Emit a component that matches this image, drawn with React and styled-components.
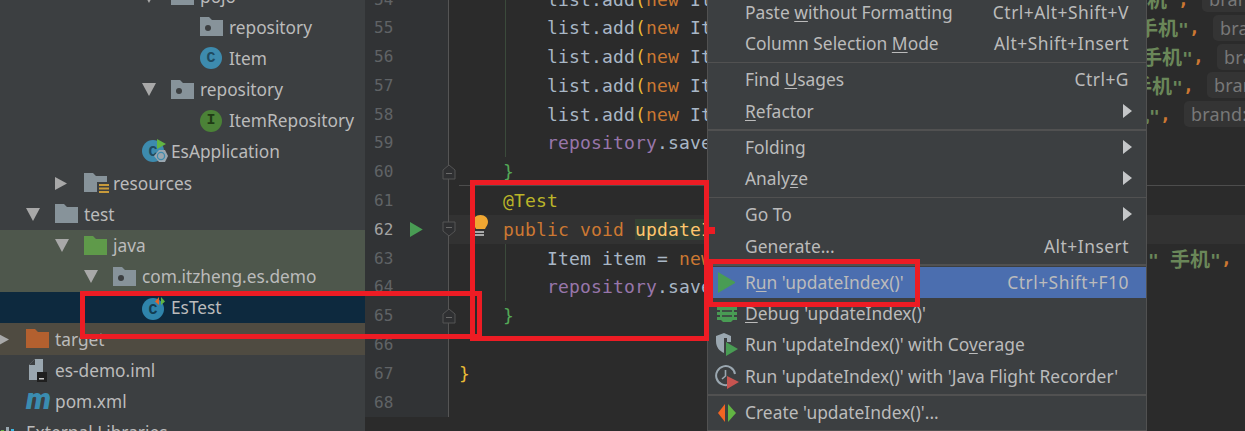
import React from 'react'
import styled, { createGlobalStyle } from 'styled-components'

const Global = createGlobalStyle`
  html, body { margin: 0; padding: 0; background: #2b2b2b; }
`
const UI_FONT = `"Noto Sans", "Noto Sans CJK SC", sans-serif`
const MONO_FONT = `"DejaVu Sans Mono", "Noto Sans CJK SC", monospace`

const Frame = styled.div`
  position: relative;
  display: flex;
  width: 1245px;
  height: 431px;
  overflow: hidden;
  background: #2b2b2b;
`
/* project tree */
const Sidebar = styled.div`
  flex: 0 0 365px;
  height: 431px;
  overflow: hidden;
  background: #3c3f41;
  font-family: ${UI_FONT};
`
const Tree = styled.div`
  margin-top: -19.6px;
`
const BANDS = { green: '#4e574c', selected: '#0d293e', brown: '#4f4b41' }
const TreeRow = styled.div`
  display: flex;
  align-items: center;
  height: 31.2px;
  background: ${({ $band }) => BANDS[$band] || 'transparent'};
  color: #bbbbbb;
  font-size: 17.3px;
  white-space: nowrap;
`
const ArrowSlot = styled.div`
  flex: 0 0 29px;
  display: flex;
  align-items: center;
  margin-left: ${({ $depth }) => 29 * $depth - 32}px;
`
const IconSlot = styled.div`
  flex: 0 0 29px;
  display: flex;
  align-items: center;
  height: 24px;
`
const ClassBadge = styled.span`
  display: flex;
  align-items: center;
  justify-content: center;
  width: 22px;
  height: 22px;
  border-radius: 50%;
  background: ${({ $bg }) => $bg};
  color: ${({ $fg }) => $fg};
  font-family: "Liberation Mono", monospace;
  font-size: 15px;
  font-weight: 700;
`
const MavenMark = styled.span`
  margin-top: -5px;
  color: #3a8cb0;
  font-family: Roboto, sans-serif;
  font-size: 30px;
  font-style: italic;
  font-weight: 900;
  line-height: 24px;
`

/* editor */
const Editor = styled.div`
  flex: 1;
  height: 431px;
  overflow: hidden;
  font-family: ${MONO_FONT};
`
const Lines = styled.div`
  margin-top: -15.4px;
`
const EditorRow = styled.div`
  display: flex;
  height: 28.8px;
`
const Gutter = styled.div`
  flex: 0 0 84px;
  display: flex;
  align-items: center;
  box-sizing: border-box;
  background: #313335;
  border-right: 1px solid #555555;
`
const LineNo = styled.span`
  flex: 0 0 45px;
  box-sizing: border-box;
  padding-left: 9px;
  color: ${({ $active }) => ($active ? '#a4a3a3' : '#606366')};
  font-size: 16px;
`
const RunSlot = styled.span`
  flex: 0 0 32px;
  display: flex;
  align-items: center;
`
const FoldSlot = styled.span`
  position: relative;
  z-index: 1;
  display: flex;
  width: 14px;
  margin-right: -8px;
`
const Line = styled.div`
  position: relative;
  flex: 1;
  display: flex;
  align-items: center;
  background: ${({ $current }) => ($current ? '#323232' : 'transparent')};
  ${({ $guide }) => $guide && `
    &::before {
      content: '';
      position: absolute;
      left: 56px;
      top: 0;
      bottom: 0;
      width: 1px;
      background: #3b4a3b;
    }
  `}
  ${({ $rule }) => $rule && `
    &::after {
      content: '';
      position: absolute;
      left: 10px;
      right: 0;
      top: -1px;
      height: 1px;
      background: #4d4d4d;
    }
  `}
`
const Code = styled.div`
  flex: 0 0 651px;
  box-sizing: border-box;
  padding-left: 10px;
  overflow: hidden;
  color: #a9b7c6;
  font-size: 18px;
  letter-spacing: 0.16px;
  white-space: pre;
`
const Tail = styled.div`
  display: flex;
  align-items: center;
  flex-shrink: 0;
  padding-left: ${({ $at }) => $at - 1100}px;
  font-size: 18px;
  letter-spacing: 0.16px;
  white-space: pre;
`
const Keyword = styled.span`color: #cc7832;`
const Field = styled.span`color: #9876aa;`
const Annotation = styled.span`color: #bbb529;`
const Paren = styled.span`color: #e8ba36;`
const Brace = styled.span`color: ${({ $color }) => $color};`
const Method = styled.span`
  background: #344134;
  color: #ffc66d;
`
const Str = styled.span`
  color: #6a8759;
  font-weight: 700;
`
const Cjk = styled.span`
  font-size: 20px;
  letter-spacing: 0;
`
const Comma = styled.span`
  color: #cc7832;
  font-weight: 700;
`
const Hint = styled.span`
  margin-left: 13px;
  padding: 0 7px;
  border-radius: 5px;
  background: #343434;
  color: #787878;
  font-family: ${UI_FONT};
  font-size: 18px;
  line-height: 26px;
`
const Bulb = styled.svg`
  position: absolute;
  left: 24px;
  top: 0;
`

/* context menu */
const Menu = styled.div`
  position: absolute;
  left: 707px;
  top: -2.7px;
  z-index: 2;
  width: 440px;
  box-sizing: border-box;
  background: #3c3f41;
  border-left: 1px solid #515151;
  border-right: 1px solid #515151;
  color: #bbbbbb;
  font-family: ${UI_FONT};
  font-size: 17.4px;
`
const Item = styled.div`
  display: flex;
  align-items: center;
  box-sizing: border-box;
  height: 31.4px;
  padding-right: 17px;
  padding-bottom: 2px;
  background: ${({ $active }) => ($active ? '#4b6eaf' : 'transparent')};
  white-space: nowrap;
`
const ItemIcon = styled.span`
  flex: 0 0 37px;
  display: flex;
  align-items: center;
  justify-content: center;
  margin-top: 2px;
`
const ItemLabel = styled.span`
  flex: 1;
`
const Shortcut = styled.span`
  letter-spacing: 0.5px;
`
const Mnemonic = styled.u`
  text-underline-offset: 2px;
`
const SubArrow = styled.svg`
  margin-right: -3px;
`
const Separator = styled.div`
  display: flex;
  align-items: center;
  height: 4.6px;
  &::before {
    content: '';
    flex: 1;
    height: ${({ $thick }) => ($thick ? 2 : 1)}px;
    background: #515151;
  }
`

/* red annotation boxes painted on the screenshot */
const RedBox = styled.div`
  position: absolute;
  z-index: 3;
  left: ${({ $x }) => $x}px;
  top: ${({ $y }) => $y}px;
  width: ${({ $w }) => $w}px;
  height: ${({ $h }) => $h}px;
  box-sizing: border-box;
  border: 5px solid #ed1c24;
`
const RedDot = styled.div`
  position: absolute;
  z-index: 3;
  left: 709px;
  top: 227px;
  width: 6px;
  height: 7px;
  background: #ed1c24;
`

const Arrow = ({ open }) => (
  <svg width="15" height="13" viewBox="0 0 15 13">
    {open
      ? <polygon points="0,0 14,0 7,13" fill="#a8a8a8" />
      : <polygon points="0,0 12,6.5 0,13" fill="#a8a8a8" />}
  </svg>
)

const MenuArrow = () => (
  <SubArrow width="9" height="14" viewBox="0 0 9 14">
    <polygon points="0,0 9,7 0,14" fill="#c4c6c8" />
  </SubArrow>
)

const Folder = ({ color = '#87939a', dot, bars }) => (
  <svg width="26" height="24" viewBox="0 0 26 24">
    <path d="M0 2 H9 L12 5 H23 V21 H0 Z" fill={color} />
    {dot && <circle cx="8" cy="13" r="3" fill="#3c3f41" />}
    {bars && (
      <g>
        <rect x="13" y="11" width="13" height="13" fill="#3c3f41" />
        <rect x="15" y="13" width="10" height="2" fill="#c79a3b" />
        <rect x="15" y="16.5" width="10" height="2" fill="#c79a3b" />
        <rect x="15" y="20" width="10" height="2" fill="#c79a3b" />
      </g>
    )}
  </svg>
)

const AppClassIcon = () => (
  <svg width="26" height="26" viewBox="0 0 26 26">
    <circle cx="11" cy="12" r="11" fill="#3d8bae" />
    <text x="11" y="17" textAnchor="middle" fontFamily="Liberation Mono" fontWeight="700" fontSize="15" fill="#1f4a60">C</text>
    <polygon points="15,0 24,5 15,10" fill="#62b543" />
    <polygon points="17,11 23,11 26,17 23,23 17,23 12,17" fill="#9aa7b0" />
    <circle cx="19" cy="17" r="3.6" fill="none" stroke="#3d8bae" strokeWidth="1.3" />
  </svg>
)

const TestClassIcon = () => (
  <svg width="26" height="26" viewBox="0 0 26 26">
    <circle cx="11" cy="14" r="11" fill="#2f84ab" />
    <text x="11" y="19" textAnchor="middle" fontFamily="Liberation Mono" fontWeight="700" fontSize="15" fill="#123c52">C</text>
    <polygon points="17,2 13,6.5 17,10" fill="#e0662a" />
    <polygon points="19,2 23,6.5 19,10" fill="#62b543" />
  </svg>
)

const ImlIcon = () => (
  <svg width="26" height="24" viewBox="0 0 26 24">
    <path d="M3 7 L9 1 H17 V22 H3 Z" fill="#9aa7b0" />
    <path d="M3 7 H9 V1 Z" fill="#3c3f41" />
    <rect x="11" y="14" width="10" height="10" fill="#1f1f1f" />
    <rect x="13" y="20" width="5" height="1.5" fill="#c8c8c8" />
  </svg>
)

const LibIcon = () => (
  <svg width="26" height="24" viewBox="-3 0 26 24">
    <rect x="1" y="9" width="3" height="14" fill="#62b543" />
    <rect x="6" y="6" width="3" height="17" fill="#9aa7b0" />
    <rect x="11" y="8" width="3" height="15" fill="#40b6e0" />
    <rect x="16" y="10" width="3" height="13" fill="#9aa7b0" />
  </svg>
)

const FoldMark = ({ down }) => (
  <svg width="14" height="16" viewBox="0 0 14 16">
    <path
      d={down ? 'M1 1 H13 V10 L7 15 L1 10 Z' : 'M1 15 H13 V6 L7 1 L1 6 Z'}
      fill="#2f3032"
      stroke="#555555"
    />
    <path d={down ? 'M4 6.5 H10' : 'M4 9.5 H10'} stroke="#6a6a6a" />
  </svg>
)

const BulbIcon = () => (
  <Bulb width="16" height="24" viewBox="0 0 16 24">
    <path d="M7.5 0 C3 0 0 3 0 7 C0 10 2 11.5 3 14 H12 C13 11.5 15 10 15 7 C15 3 12 0 7.5 0 Z" fill="#f0a732" />
    <rect x="2" y="16" width="9" height="2" fill="#a8a8a8" />
    <rect x="2" y="19" width="9" height="2" fill="#a8a8a8" />
  </Bulb>
)

const Play = ({ size = 14, color = '#499c54' }) => (
  <svg width={size * 0.85} height={size} viewBox="0 0 12 14">
    <polygon points="0,0 12,7 0,14" fill={color} />
  </svg>
)

const BugIcon = () => (
  <svg width="20" height="19" viewBox="0 0 20 19">
    <path d="M6 1 H14 L17 4 V15 L14 18 H6 L3 15 V4 Z" fill="#499c54" />
    <rect x="0" y="3" width="20" height="3" fill="#499c54" />
    <rect x="0" y="8" width="20" height="3" fill="#499c54" />
    <rect x="0" y="13" width="20" height="3" fill="#499c54" />
    <rect x="5" y="6.2" width="10" height="1.6" fill="#3c3f41" />
    <rect x="5" y="11.2" width="10" height="1.6" fill="#3c3f41" />
  </svg>
)

const CoverageIcon = () => (
  <svg width="24" height="24" viewBox="0 0 24 24">
    <path d="M1 3 L9 0 L16 3 V9 H12 V5 H9 V20 C5 18 1 15 1 8 Z" fill="#9aa7b0" />
    <polygon points="11,9 23,16 11,23" fill="#499c54" />
  </svg>
)

const RecorderIcon = () => (
  <svg width="24" height="24" viewBox="0 0 24 24">
    <path d="M14 19.5 A9.5 9.5 0 1 1 20 9" fill="none" stroke="#9aa7b0" strokeWidth="2" />
    <path d="M10.5 5 V11 L7 14" fill="none" stroke="#9aa7b0" strokeWidth="1.6" />
    <polygon points="12,11 24,17 12,24" fill="#c75450" />
  </svg>
)

const CreateIcon = () => (
  <svg width="20" height="18" viewBox="0 0 20 18">
    <polygon points="8,0 1,9 8,18" fill="#f26522" />
    <polygon points="11,0 19,9 11,18" fill="#62b543" />
  </svg>
)

const PhoneTail = ({ at, hint = 'brand' }) => (
  <Tail $at={at}>
    <Str><Cjk>手机</Cjk>"</Str>
    <Comma>,</Comma>
    <Hint>{hint}</Hint>
  </Tail>
)

const listAdd = (
  <Code>
    {'        list.add'}<Paren>(</Paren><Keyword>new</Keyword>{' Item'}
  </Code>
)

const Row = ({ no, active, run, fold, current, guide, rule, children }) => (
  <EditorRow>
    <Gutter>
      <LineNo $active={active}>{no}</LineNo>
      <RunSlot>{run && <Play size={15} />}</RunSlot>
      <FoldSlot>{fold && <FoldMark down={fold === 'down'} />}</FoldSlot>
    </Gutter>
    <Line $current={current} $guide={guide} $rule={rule}>{children}</Line>
  </EditorRow>
)

export default function App() {
  return (
    <Frame>
      <Global />
      <Sidebar>
        <Tree>
          <TreeRow>
            <ArrowSlot $depth={6}><Arrow open /></ArrowSlot>
            <IconSlot><Folder dot /></IconSlot>pojo
          </TreeRow>
          <TreeRow>
            <ArrowSlot $depth={7} />
            <IconSlot><Folder dot /></IconSlot>repository
          </TreeRow>
          <TreeRow>
            <ArrowSlot $depth={7} />
            <IconSlot><ClassBadge $bg="#3d8bae" $fg="#1f4a60">C</ClassBadge></IconSlot>Item
          </TreeRow>
          <TreeRow>
            <ArrowSlot $depth={6}><Arrow open /></ArrowSlot>
            <IconSlot><Folder dot /></IconSlot>repository
          </TreeRow>
          <TreeRow>
            <ArrowSlot $depth={7} />
            <IconSlot><ClassBadge $bg="#4b8237" $fg="#1f3a15">I</ClassBadge></IconSlot>ItemRepository
          </TreeRow>
          <TreeRow>
            <ArrowSlot $depth={5} />
            <IconSlot><AppClassIcon /></IconSlot>EsApplication
          </TreeRow>
          <TreeRow>
            <ArrowSlot $depth={3}><Arrow /></ArrowSlot>
            <IconSlot><Folder bars /></IconSlot>resources
          </TreeRow>
          <TreeRow>
            <ArrowSlot $depth={2}><Arrow open /></ArrowSlot>
            <IconSlot><Folder /></IconSlot>test
          </TreeRow>
          <TreeRow $band="green">
            <ArrowSlot $depth={3}><Arrow open /></ArrowSlot>
            <IconSlot><Folder color="#5f9a4a" /></IconSlot>java
          </TreeRow>
          <TreeRow $band="green">
            <ArrowSlot $depth={4}><Arrow open /></ArrowSlot>
            <IconSlot><Folder dot /></IconSlot>com.itzheng.es.demo
          </TreeRow>
          <TreeRow $band="selected">
            <ArrowSlot $depth={5} />
            <IconSlot><TestClassIcon /></IconSlot>EsTest
          </TreeRow>
          <TreeRow $band="brown">
            <ArrowSlot $depth={1}><Arrow /></ArrowSlot>
            <IconSlot><Folder color="#b3602f" /></IconSlot>target
          </TreeRow>
          <TreeRow>
            <ArrowSlot $depth={1} />
            <IconSlot><ImlIcon /></IconSlot>es-demo.iml
          </TreeRow>
          <TreeRow>
            <ArrowSlot $depth={1} />
            <IconSlot><MavenMark>m</MavenMark></IconSlot>pom.xml
          </TreeRow>
          <TreeRow>
            <ArrowSlot $depth={0} />
            <IconSlot><LibIcon /></IconSlot>External Libraries
          </TreeRow>
        </Tree>
      </Sidebar>

      <Editor>
        <Lines>
          <Row no={54} guide>{listAdd}<PhoneTail at={1127} /></Row>
          <Row no={55} guide>{listAdd}<PhoneTail at={1138} /></Row>
          <Row no={56} guide>{listAdd}<PhoneTail at={1142} /></Row>
          <Row no={57} guide>{listAdd}<PhoneTail at={1132} /></Row>
          <Row no={58} guide>{listAdd}<PhoneTail at={1109} hint="brand:" /></Row>
          <Row no={59} guide>
            <Code>{'        '}<Field>repository</Field>.save(list);</Code>
          </Row>
          <Row no={60} fold="up">
            <Code>{'    '}<Brace $color="#54a857">{'}'}</Brace></Code>
          </Row>
          <Row no={61} rule>
            <Code>{'    '}<Annotation>@Test</Annotation></Code>
          </Row>
          <Row no={62} active run fold="down" current>
            <Code>
              {'    '}<Keyword>public void</Keyword> <Method>updateIndex</Method>(){' {'}
            </Code>
            <BulbIcon />
          </Row>
          <Row no={63} guide>
            <Code>{'        '}Item item = <Keyword>new</Keyword> Item</Code>
            <Tail $at={1148}><Str>{'" '}<Cjk>手机</Cjk>"</Str><Comma>,</Comma></Tail>
          </Row>
          <Row no={64} guide>
            <Code>{'        '}<Field>repository</Field>.save(item);</Code>
          </Row>
          <Row no={65} fold="up">
            <Code>{'    '}<Brace $color="#54a857">{'}'}</Brace></Code>
          </Row>
          <Row no={66}><Code /></Row>
          <Row no={67}>
            <Code><Brace $color="#e8ba36">{'}'}</Brace></Code>
          </Row>
          <Row no={68}><Code /></Row>
        </Lines>
      </Editor>

      <Menu>
        <Item>
          <ItemIcon />
          <ItemLabel>Paste <Mnemonic>w</Mnemonic>ithout Formatting</ItemLabel>
          <Shortcut>Ctrl+Alt+Shift+V</Shortcut>
        </Item>
        <Item>
          <ItemIcon />
          <ItemLabel>Column Selection <Mnemonic>M</Mnemonic>ode</ItemLabel>
          <Shortcut>Alt+Shift+Insert</Shortcut>
        </Item>
        <Separator />
        <Item>
          <ItemIcon />
          <ItemLabel>Find <Mnemonic>U</Mnemonic>sages</ItemLabel>
          <Shortcut>Ctrl+G</Shortcut>
        </Item>
        <Item>
          <ItemIcon />
          <ItemLabel><Mnemonic>R</Mnemonic>efactor</ItemLabel>
          <MenuArrow />
        </Item>
        <Separator $thick />
        <Item>
          <ItemIcon />
          <ItemLabel>Folding</ItemLabel>
          <MenuArrow />
        </Item>
        <Item>
          <ItemIcon />
          <ItemLabel>Analy<Mnemonic>z</Mnemonic>e</ItemLabel>
          <MenuArrow />
        </Item>
        <Separator />
        <Item>
          <ItemIcon />
          <ItemLabel>Go To</ItemLabel>
          <MenuArrow />
        </Item>
        <Item>
          <ItemIcon />
          <ItemLabel>Generate...</ItemLabel>
          <Shortcut>Alt+Insert</Shortcut>
        </Item>
        <Separator $thick />
        <Item $active>
          <ItemIcon><Play size={21} /></ItemIcon>
          <ItemLabel>R<Mnemonic>u</Mnemonic>n 'updateIndex()'</ItemLabel>
          <Shortcut>Ctrl+Shift+F10</Shortcut>
        </Item>
        <Item>
          <ItemIcon><BugIcon /></ItemIcon>
          <ItemLabel><Mnemonic>D</Mnemonic>ebug 'updateIndex()'</ItemLabel>
        </Item>
        <Item>
          <ItemIcon><CoverageIcon /></ItemIcon>
          <ItemLabel>Run 'updateIndex()' with Co<Mnemonic>v</Mnemonic>erage</ItemLabel>
        </Item>
        <Item>
          <ItemIcon><RecorderIcon /></ItemIcon>
          <ItemLabel>Run 'updateIndex()' with 'Java Flight Recorder'</ItemLabel>
        </Item>
        <Separator $thick />
        <Item>
          <ItemIcon><CreateIcon /></ItemIcon>
          <ItemLabel>Create 'updateIndex()'...</ItemLabel>
        </Item>
        <Separator $thick />
      </Menu>

      <RedBox $x={470} $y={180} $w={239} $h={161} />
      <RedBox $x={80} $y={291} $w={402} $h={48} />
      <RedBox $x={708} $y={259} $w={212} $h={48} />
      <RedDot />
    </Frame>
  )
}
